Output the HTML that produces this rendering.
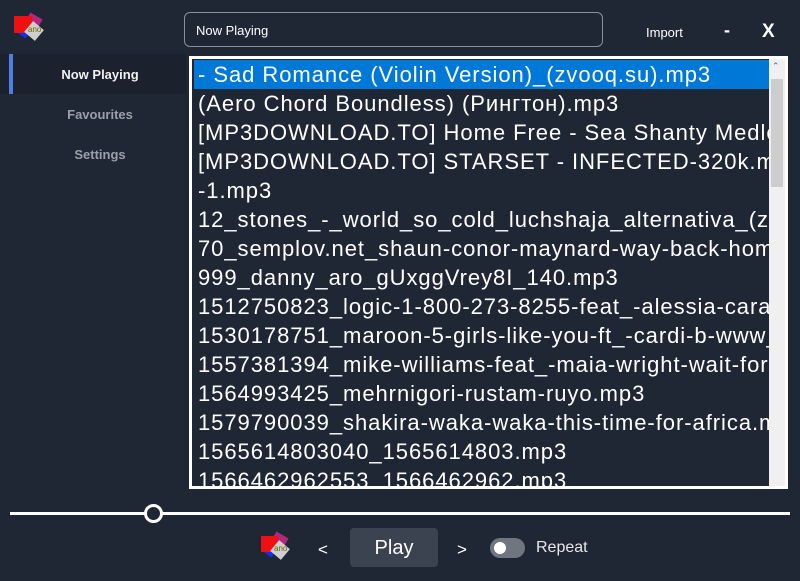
<!DOCTYPE html>
<html><head><meta charset="utf-8"><style>
*{margin:0;padding:0;box-sizing:border-box}
body{width:800px;height:581px;background:#1f2735;overflow:hidden;position:relative;font-family:"Liberation Sans","DejaVu Sans",sans-serif;color:#fff}
.abs{position:absolute}
.side{left:0;top:54px;width:186px;height:40px;background:#1b212d}
.bar{left:9px;top:54px;width:4px;height:40px;background:#4e7fe8}
.nav{left:0;width:200px;text-align:center;font-size:13px}
.search{left:184px;top:12px;width:419px;height:35px;border:1px solid #8a909a;border-radius:6px;font-size:13px;padding:10px 11px}
.list{left:189px;top:56px;width:599px;height:433px;border:3px solid #fff;overflow:hidden}
.rows{position:absolute;left:2px;top:1px;width:578px;font-size:22px;letter-spacing:0.95px;line-height:29px;white-space:nowrap}
.rows div{padding-left:4px;height:29px;overflow:hidden}
.sel{background:#0078d7}
.sb{right:0;top:0;width:16px;height:100%;background:#f0f0f0}
.th{left:2px;top:20px;width:12px;height:108px;background:#cdcdcd}
</style></head><body>
<svg class="abs" style="left:12px;top:12px" width="36" height="36" viewBox="0 0 36 36">
<rect x="14" y="3" width="14" height="14" fill="#b0287a" transform="rotate(30 21 10)"/>
<rect x="6" y="12" width="12" height="12" fill="#1030ff" transform="rotate(35 12 18)"/>
<rect x="2" y="4" width="18" height="17" fill="#ee1111"/>
<rect x="15" y="12" width="14" height="14" fill="#cfcfcf" transform="rotate(40 22 19)"/>
<text x="16" y="20" font-size="8" fill="#6a6a00" font-family="Liberation Sans">ano</text>
</svg>
<div class="abs side"></div><div class="abs bar"></div>
<div class="abs nav" style="top:67px;font-weight:bold;color:#f0f0f0">Now Playing</div>
<div class="abs nav" style="top:107px;color:#9aa0a8;font-weight:bold">Favourites</div>
<div class="abs nav" style="top:147px;color:#9aa0a8;font-weight:bold">Settings</div>
<div class="abs search">Now Playing</div>
<div class="abs" style="left:646px;top:25px;font-size:13px">Import</div>
<div class="abs" style="left:724px;top:20px;font-size:18px;font-weight:bold">-</div>
<div class="abs" style="left:762px;top:21px;font-size:19px;font-weight:bold">X</div>
<div class="abs list">
<div class="rows">
<div class="sel">- Sad Romance (Violin Version)_(zvooq.su).mp3</div>
<div>(Aero Chord Boundless) (Рингтон).mp3</div>
<div>[MP3DOWNLOAD.TO] Home Free - Sea Shanty Medley</div>
<div>[MP3DOWNLOAD.TO] STARSET - INFECTED-320k.mp3</div>
<div>-1.mp3</div>
<div>12_stones_-_world_so_cold_luchshaja_alternativa_(zf</div>
<div>70_semplov.net_shaun-conor-maynard-way-back-home</div>
<div>999_danny_aro_gUxggVrey8I_140.mp3</div>
<div>1512750823_logic-1-800-273-8255-feat_-alessia-cara-</div>
<div>1530178751_maroon-5-girls-like-you-ft_-cardi-b-www_</div>
<div>1557381394_mike-williams-feat_-maia-wright-wait-for-</div>
<div>1564993425_mehrnigori-rustam-ruyo.mp3</div>
<div>1579790039_shakira-waka-waka-this-time-for-africa.mp3</div>
<div>1565614803040_1565614803.mp3</div>
<div>1566462962553_1566462962.mp3</div>
</div>
<div class="abs sb"><div class="abs th"></div>
<div class="abs" style="left:3px;top:2px;font-size:9px;color:#666">⌃</div></div>
</div>
<div class="abs" style="left:10px;top:512px;width:780px;height:3px;background:#fff"></div>
<div class="abs" style="left:144px;top:504px;width:19px;height:19px;border-radius:50%;border:3px solid #fff;background:#1f2735"></div>
<svg class="abs" style="left:258px;top:531px" width="36" height="36" viewBox="0 0 36 36">
<rect x="14" y="3" width="14" height="14" fill="#b0287a" transform="rotate(30 21 10)"/>
<rect x="6" y="12" width="12" height="12" fill="#1030ff" transform="rotate(35 12 18)"/>
<rect x="3" y="5" width="17" height="16" fill="#ee1111"/>
<rect x="15" y="12" width="14" height="14" fill="#cfcfcf" transform="rotate(40 22 19)"/>
<text x="16" y="20" font-size="8" fill="#6a6a00" font-family="Liberation Sans">ano</text>
</svg>
<div class="abs" style="left:318px;top:540px;font-size:17px">&lt;</div>
<div class="abs" style="left:350px;top:528px;width:88px;height:39px;background:#3c4350;border-radius:4px;text-align:center;line-height:41px;font-size:20px">Play</div>
<div class="abs" style="left:457px;top:540px;font-size:17px">&gt;</div>
<div class="abs" style="left:490px;top:538px;width:35px;height:20px;border-radius:10px;background:#6f7680"></div>
<div class="abs" style="left:494px;top:542px;width:12px;height:12px;border-radius:50%;background:#fff"></div>
<div class="abs" style="left:536px;top:539px;font-size:16px;color:#e8e8e8">Repeat</div>
</body></html>
